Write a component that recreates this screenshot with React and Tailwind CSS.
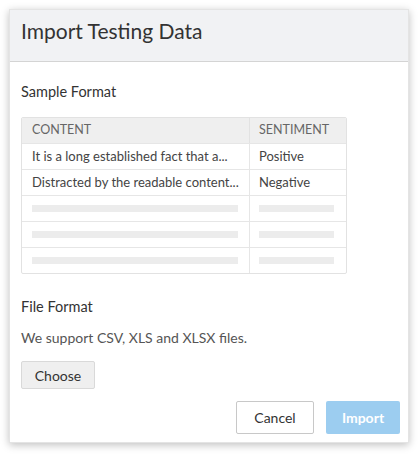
import React from "react";

const rows = [
  { content: "It is a long established fact that a...", sentiment: "Positive" },
  { content: "Distracted by the readable content...", sentiment: "Negative" },
  null,
  null,
  null,
];

export default function App() {
  return (
    <div className="min-h-[455px] w-[419px] bg-white pt-[9px] pl-[9px]" style={{ fontFamily: "Lato, 'Open Sans', sans-serif" }}>
      <div className="flex w-[400px] flex-col border border-[#e4e4e4] bg-white shadow-[0_2px_8px_rgba(0,0,0,0.25)]">
        {/* header */}
        <div className="flex h-[52px] items-start border-b border-[#d4d4d4] bg-[#f1f2f4] px-[11px] pt-[10px]">
          <h1 className="text-[21px] leading-none text-[#333]">Import Testing Data</h1>
        </div>

        {/* body */}
        <div className="flex flex-col px-[11px] pb-[8px]">
          <div className="mt-[20px] text-[14.5px] leading-[20px] text-[#333]">Sample Format</div>

          <div className="mt-[15px] w-[326px] overflow-hidden rounded-[2px] border border-[#e2e2e2] text-[13px]">
            <div className="flex h-[25px] items-center bg-[#efefef] text-[12.5px] text-[#666]">
              <div className="flex h-full w-[228px] items-center border-r border-[#e2e2e2] pl-[10px]">CONTENT</div>
              <div className="pl-[9px]">SENTIMENT</div>
            </div>
            {rows.map((row, i) => (
              <div key={i} className="flex h-[26px] items-center border-t border-[#e6e6e6] text-[#444]">
                <div className="flex h-full w-[228px] items-center border-r border-[#e6e6e6] pl-[10px]">
                  {row ? row.content : <span className="h-[7px] w-[206px] bg-[#ececec]" />}
                </div>
                <div className="flex h-full items-center pl-[9px]">
                  {row ? row.sentiment : <span className="h-[7px] w-[75px] bg-[#ececec]" />}
                </div>
              </div>
            ))}
          </div>

          <div className="mt-[23px] text-[14.5px] leading-[20px] text-[#333]">File Format</div>
          <div className="mt-[11px] text-[14px] leading-[20px] text-[#555]">We support CSV, XLS and XLSX files.</div>

          <button className="mt-[13px] h-[28px] w-[74px] rounded-[2px] border border-[#d9d9d9] bg-[#efefef] text-[14px] text-[#333]">
            Choose
          </button>

          <div className="-mr-[3px] mt-[12px] flex justify-end gap-[12px]">
            <button className="h-[33px] w-[78px] rounded-[2px] border border-[#c8c8c8] bg-white text-[14px] text-[#333]">
              Cancel
            </button>
            <button className="h-[33px] w-[74px] rounded-[2px] bg-[#9ccdf0] text-[14px] font-bold text-white">
              Import
            </button>
          </div>
        </div>
      </div>
    </div>
  );
}
